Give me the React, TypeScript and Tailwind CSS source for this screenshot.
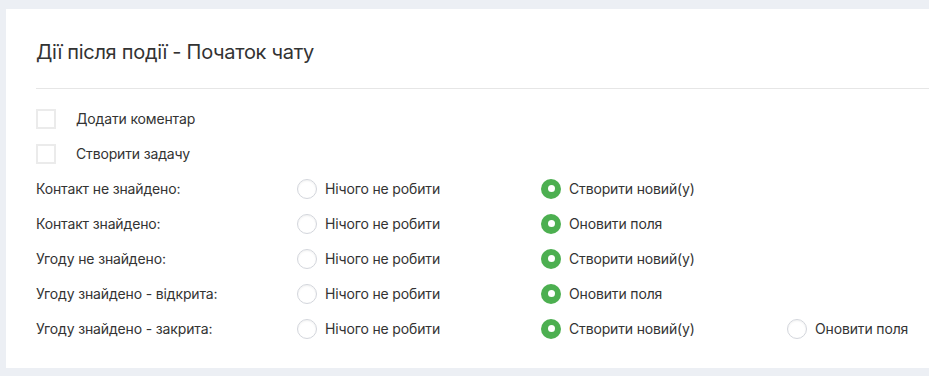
import { useState } from "react";

type Option = { value: string; label: string };

const rows: { label: string; options: Option[]; selected: string }[] = [
  {
    label: "Контакт не знайдено:",
    options: [
      { value: "none", label: "Нічого не робити" },
      { value: "create", label: "Створити новий(у)" },
    ],
    selected: "create",
  },
  {
    label: "Контакт знайдено:",
    options: [
      { value: "none", label: "Нічого не робити" },
      { value: "update", label: "Оновити поля" },
    ],
    selected: "update",
  },
  {
    label: "Угоду не знайдено:",
    options: [
      { value: "none", label: "Нічого не робити" },
      { value: "create", label: "Створити новий(у)" },
    ],
    selected: "create",
  },
  {
    label: "Угоду знайдено - відкрита:",
    options: [
      { value: "none", label: "Нічого не робити" },
      { value: "update", label: "Оновити поля" },
    ],
    selected: "update",
  },
  {
    label: "Угоду знайдено - закрита:",
    options: [
      { value: "none", label: "Нічого не робити" },
      { value: "create", label: "Створити новий(у)" },
      { value: "update", label: "Оновити поля" },
    ],
    selected: "create",
  },
];

function Radio({ checked, label, onClick }: { checked: boolean; label: string; onClick: () => void }) {
  return (
    <button type="button" onClick={onClick} className="flex items-center gap-2 cursor-pointer">
      {checked ? (
        <span className="w-5 h-5 rounded-full bg-[#4caf50] flex items-center justify-center">
          <span className="w-[7px] h-[7px] rounded-full bg-white" />
        </span>
      ) : (
        <span className="w-5 h-5 rounded-full border border-[#d3d6dc] bg-white shadow-[inset_0_1px_2px_rgba(0,0,0,0.06)]" />
      )}
      <span className="text-sm text-[#333] tracking-[-0.15px]">{label}</span>
    </button>
  );
}

export default function App() {
  const [checks, setChecks] = useState({ comment: false, task: false });
  const [values, setValues] = useState(rows.map((r) => r.selected));

  return (
    <div className="min-h-screen bg-[#eceff4] pt-[9px] pl-[6px] font-['Inter',sans-serif]">
      <div className="bg-white h-[359px] pl-[30px]">
        {/* заголовок */}
        <div className="h-[80px] pt-[6px] flex items-center border-b border-[#e6e6e6]">
          <h1 className="text-[20px] text-[#333] tracking-[-0.3px]">Дії після події - Початок чату</h1>
        </div>

        <div className="pt-[12px]">
          {[
            { key: "comment" as const, label: "Додати коментар" },
            { key: "task" as const, label: "Створити задачу" },
          ].map((c) => (
            <div key={c.key} className="h-[35px] flex items-center">
              <button
                type="button"
                onClick={() => setChecks({ ...checks, [c.key]: !checks[c.key] })}
                className="w-5 h-5 border-2 border-[#ebebeb] bg-white mr-5"
              />
              <span className="text-sm text-[#333] tracking-[-0.15px]">{c.label}</span>
            </div>
          ))}

          {rows.map((r, i) => (
            <div key={r.label} className="h-[35px] flex items-center">
              <div className="w-[261px] text-sm text-[#333] tracking-[-0.15px]">{r.label}</div>
              {r.options.map((o, j) => (
                <div key={o.value} className={j === 0 ? "w-[244px]" : j === 1 ? "w-[246px]" : ""}>
                  <Radio
                    checked={values[i] === o.value}
                    label={o.label}
                    onClick={() => setValues(values.map((v, k) => (k === i ? o.value : v)))}
                  />
                </div>
              ))}
            </div>
          ))}
        </div>
      </div>
    </div>
  );
}
